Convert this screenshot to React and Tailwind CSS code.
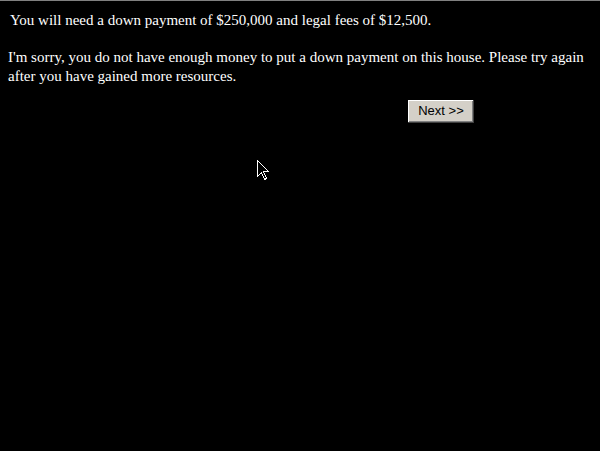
export default function App() {
  return (
    <div className="relative h-[451px] w-[600px] overflow-hidden bg-black">
      <div className="h-px bg-[#808080]" />

      {/* message text */}
      <div
        className="px-2 pt-[10px] text-[15px] leading-[19px] text-white"
        style={{ fontFamily: '"Liberation Serif", "Times New Roman", serif' }}
      >
        <p className="pl-[2px]">
          You will need a down payment of $250,000 and legal fees of $12,500.
        </p>
        <p className="mt-[18px]">
          I'm sorry, you do not have enough money to put a down payment on this house. Please try again
          after you have gained more resources.
        </p>
      </div>

      {/* next button */}
      <div className="flex pl-[408px] pt-[14px]">
        <button
          className="flex h-[23px] w-[66px] items-center justify-center bg-[#d4d0c8] pb-px text-[13px] text-black shadow-[inset_-1px_-1px_#404040,inset_1px_1px_#ffffff,inset_-2px_-2px_#808080]"
          style={{ fontFamily: '"Liberation Sans", Arial, sans-serif' }}
        >
          Next &gt;&gt;
        </button>
      </div>

      {/* mouse pointer */}
      <svg
        className="absolute left-[257px] top-[160px]"
        width="13"
        height="21"
        viewBox="0 0 13 21"
        shapeRendering="crispEdges"
      >
        <polygon
          points="0.5,0.5 0.5,16.5 4.5,12.5 7.5,19.5 9.5,18.5 6.5,11.5 11.5,11.5"
          fill="#000"
          stroke="#fff"
          strokeWidth="1"
        />
      </svg>
    </div>
  )
}
